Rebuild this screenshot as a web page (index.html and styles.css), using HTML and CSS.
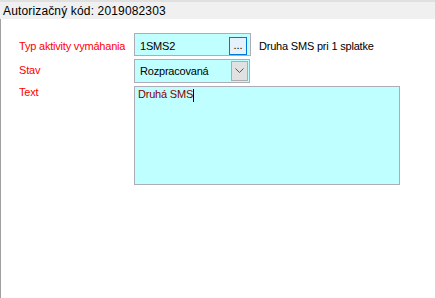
FILE: index.html
```html
<!DOCTYPE html>
<html lang="sk">
<head>
<meta charset="utf-8">
<title>Aktivita</title>
<link rel="stylesheet" href="styles.css">
</head>
<body>
<div class="frame">
  <div class="header">Autorizačný kód: 2019082303</div>
  <div class="panel">
    <div class="row row-typ">
      <span class="label">Typ aktivity vymáhania</span>
      <div class="field lookup">
        <span class="value">1SMS2</span>
        <span class="dots-btn">...</span>
      </div>
      <span class="desc">Druha SMS pri 1 splatke</span>
    </div>
    <div class="row row-stav">
      <span class="label">Stav</span>
      <div class="field combo">
        <span class="value">Rozpracovaná</span>
        <span class="arrow-btn">
          <svg width="9" height="6" viewBox="0 0 9 6"><polyline points="0.5,0.5 4.5,4.5 8.5,0.5" fill="none" stroke="#555" stroke-width="1"/></svg>
        </span>
      </div>
    </div>
    <div class="row row-text">
      <span class="label">Text</span>
      <div class="field memo"><span class="memo-text">Druhá SMS</span><span class="caret"></span></div>
    </div>
  </div>
</div>
</body>
</html>
```
FILE: styles.css
```css
html, body {
  margin: 0;
  padding: 0;
  background: #ffffff;
}
body {
  width: 435px;
  height: 298px;
  overflow: hidden;
  font-family: "Liberation Sans", Arial, sans-serif;
}
.frame {
  display: flex;
  flex-direction: column;
  height: 298px;
}
.header {
  border-top: 2px solid #e0e0e0;
  background: #f0f0f0;
  height: 15px;
  padding: 2px 0 0 3px;
  font-size: 12px;
  line-height: 15px;
  letter-spacing: 0.15px;
  color: #000;
}
.panel {
  flex: 1;
  border-left: 1px solid #a0a0a0;
  padding: 14px 0 0 18px;
  background: #fff;
  font-size: 11px;
  line-height: 13px;
  letter-spacing: -0.2px;
}
.row {
  display: flex;
  align-items: flex-start;
  margin-bottom: 3px;
}
.label {
  width: 115px;
  color: #ff0000;
  white-space: nowrap;
}
.row-typ .label { padding-top: 7px; }
.row-stav .label { padding-top: 5px; }
.row-text .label { padding-top: 0; }
.field {
  box-sizing: border-box;
  border: 1px solid #abadb8;
  background: #c0ffff;
  color: #000;
  display: flex;
}
.lookup {
  width: 117px;
  height: 23px;
  justify-content: space-between;
}
.lookup .value {
  padding: 6px 0 0 5px;
}
.dots-btn {
  box-sizing: border-box;
  align-self: flex-end;
  width: 18px;
  height: 18px;
  margin-right: 3px;
  border: 1px solid #0078d7;
  background: #e5f1fb;
  font-size: 11px;
  line-height: 15px;
  text-align: center;
  letter-spacing: 0;
}
.desc {
  padding: 7px 0 0 8px;
  color: #000;
  white-space: nowrap;
}
.combo {
  width: 116px;
  height: 24px;
  justify-content: space-between;
}
.combo .value {
  padding: 5px 0 0 5px;
}
.arrow-btn {
  box-sizing: border-box;
  width: 17px;
  height: 20px;
  margin: 1px 1px 0 0;
  border: 1px solid #adadad;
  background: #e1e1e1;
  display: flex;
  align-items: center;
  justify-content: center;
}
.memo {
  width: 266px;
  height: 99px;
  padding: 1px 0 0 3px;
  align-items: flex-start;
  color: #800000;
}
.caret {
  display: inline-block;
  width: 1px;
  height: 13px;
  margin-top: 1px;
  background: #000;
}
```
